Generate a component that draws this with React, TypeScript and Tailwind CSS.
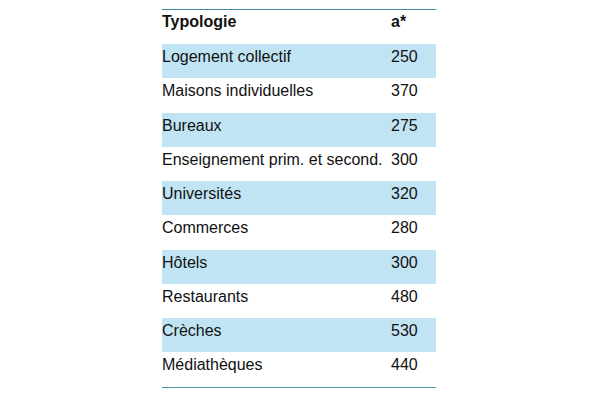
import React from "react";

const rows: [string, string][] = [
  ["Logement collectif", "250"],
  ["Maisons individuelles", "370"],
  ["Bureaux", "275"],
  ["Enseignement prim. et second.", "300"],
  ["Universités", "320"],
  ["Commerces", "280"],
  ["Hôtels", "300"],
  ["Restaurants", "480"],
  ["Crèches", "530"],
  ["Médiathèques", "440"],
];

export default function App() {
  return (
    <div className="w-[600px] h-[400px] bg-white flex pl-[162px] pt-[9px] font-['Liberation_Sans',Arial,sans-serif] text-[16px] text-[#111]">
      <div className="w-[274px] flex flex-col">
        <div className="h-[35px] border-t border-[#3f8aa8] flex">
          <div className="w-[229px] pt-[1px] leading-[22px] font-bold">Typologie</div>
          <div className="pt-[1px] leading-[22px] font-bold">a*</div>
        </div>
        {rows.map(([name, value], i) => (
          <div
            key={name}
            className={`h-[34.25px] flex ${i % 2 === 0 ? "bg-[#c1e4f5]" : "bg-white"}`}
          >
            <div className="w-[229px] pt-[2px] leading-[22px]">{name}</div>
            <div className="pt-[2px] leading-[22px]">{value}</div>
          </div>
        ))}
        <div className="border-t-[1.5px] border-[#4f95b2]" />
      </div>
    </div>
  );
}
